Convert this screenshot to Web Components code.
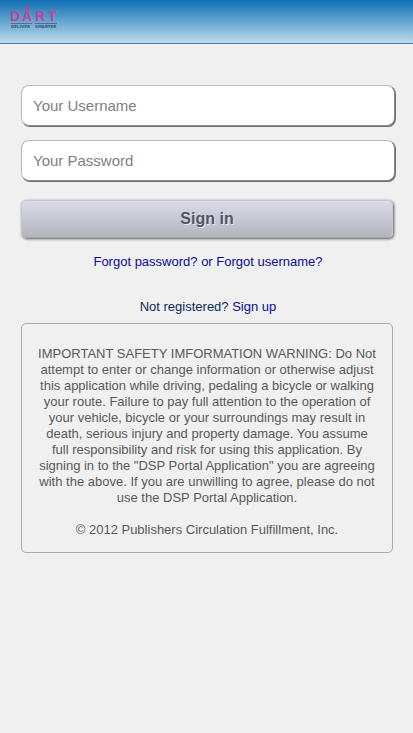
<!DOCTYPE html>
<html lang="en">
<head>
<meta charset="utf-8">
<meta name="viewport" content="width=device-width, initial-scale=1">
<title>DART – Sign in</title>
<style>
html{background:#f0f0f0}
body{margin:0;font:13px/16px "Liberation Sans",Arial,sans-serif;color:#595959}
</style>
</head>
<body>
<dart-login-page></dart-login-page>
<script>
const define = (name, html) => {
  const template = document.createElement('template');
  template.innerHTML = html;
  customElements.define(name, class extends HTMLElement {
    constructor() {
      super();
      this.attachShadow({mode: 'open'}).append(template.content.cloneNode(true));
    }
    connectedCallback() {
      const input = this.shadowRoot.querySelector('input');
      if (input) {
        input.type = this.getAttribute('type') || 'text';
        input.placeholder = this.getAttribute('label');
        input.setAttribute('aria-label', this.getAttribute('label'));
      }
    }
  });
};

define('dart-header', `
<style>
:host{display:block}
header{box-sizing:border-box;height:44px;padding:5px 10px;border-bottom:1px solid #3d7f9f;background:linear-gradient(#0e70b4,#bddcec)}
svg{display:block}
</style>
<header>
<svg width="48" height="24" viewBox="0 0 48 24" role="img" aria-label="DART Deliver Smarter">
<text x="0 12 25 38" y="16" font-family="Liberation Sans,Arial,sans-serif" font-weight="700" font-size="14" fill="#c044a0">DART</text>
<g font-family="DejaVu Sans,sans-serif" font-weight="700" font-size="4" fill="#2f5873"><text x="1" y="23">DELIVER</text><text x="25" y="23">SMARTER</text></g>
<path d="M1 18.500H22M25 18.500H47" stroke="#7a5b98" stroke-width="1"/>
<path d="M17 0l1 2 2 .3-1.500 1.500.5 2.200-2-1-2 1 .5-2.200L14 2.300 16 2z" fill="#c43d96"/>
</svg>
</header>`);

define('dart-field', `
<style>
:host{display:block}
input{display:block;box-sizing:border-box;width:100%;height:41px;margin:0;padding:0 11px;border:1px solid #bbb;border-right-color:#888;border-bottom-color:#888;border-radius:8px;background:#fff;box-shadow:1px 1px 0 #707070;color:#444;font:15px "Liberation Sans",Arial,sans-serif;outline:0}
input::placeholder{color:#808080;opacity:1}
</style>
<input>`);

define('dart-button', `
<style>
:host{display:block}
button{display:block;box-sizing:border-box;width:100%;height:38px;margin:0;padding:0;border:1px solid #c6c6cc;border-bottom-color:#a5a5aa;border-radius:5px;background:linear-gradient(#dcdcea,#b3b3bd);box-shadow:1px 1px 3px #555;color:#505664;font:bold 16px "Liberation Sans",Arial,sans-serif;text-shadow:1px 1px 0 #e8e8f0}
</style>
<button type="submit"><slot></slot></button>`);

define('dart-notice', `
<style>
:host{display:block}
section{padding:22px 15px 14px;border:1px solid #aaa;border-radius:5px;text-align:center}
::slotted(p){margin:0 0 16px}
::slotted(p:last-child){margin:0}
</style>
<section><slot></slot></section>`);

define('dart-login-page', `
<style>
:host{display:block}
main{padding:41px 18px 24px 21px}
form{display:grid;gap:14px}
dart-button{margin:5px 2px 0 0}
dart-notice{margin-right:2px}
.links{margin:16px 0 0;text-align:center}
.register{margin:29px 0 8px;color:#0c2a5c}
a{color:#0b0b99;text-decoration:none}
</style>
<dart-header></dart-header>
<main>
<form>
<dart-field label="Your Username"></dart-field>
<dart-field label="Your Password" type="password"></dart-field>
<dart-button>Sign in</dart-button>
</form>
<p class="links"><a href="#password">Forgot password?</a> <a href="#username">or Forgot username?</a></p>
<p class="links register">Not registered? <a href="#signup">Sign up</a></p>
<dart-notice>
<p>IMPORTANT SAFETY IMFORMATION WARNING: Do Not attempt to enter or change information or otherwise adjust this application while driving, pedaling a bicycle or walking your route. Failure to pay full attention to the operation of your vehicle, bicycle or your surroundings may result in death, serious injury and property damage. You assume full responsibility and risk for using this application. By signing in to the "DSP Portal Application" you are agreeing with the above. If you are unwilling to agree, please do not use the DSP Portal Application.</p>
<p>© 2012 Publishers Circulation Fulfillment, Inc.</p>
</dart-notice>
</main>`);
</script>
</body>
</html>
